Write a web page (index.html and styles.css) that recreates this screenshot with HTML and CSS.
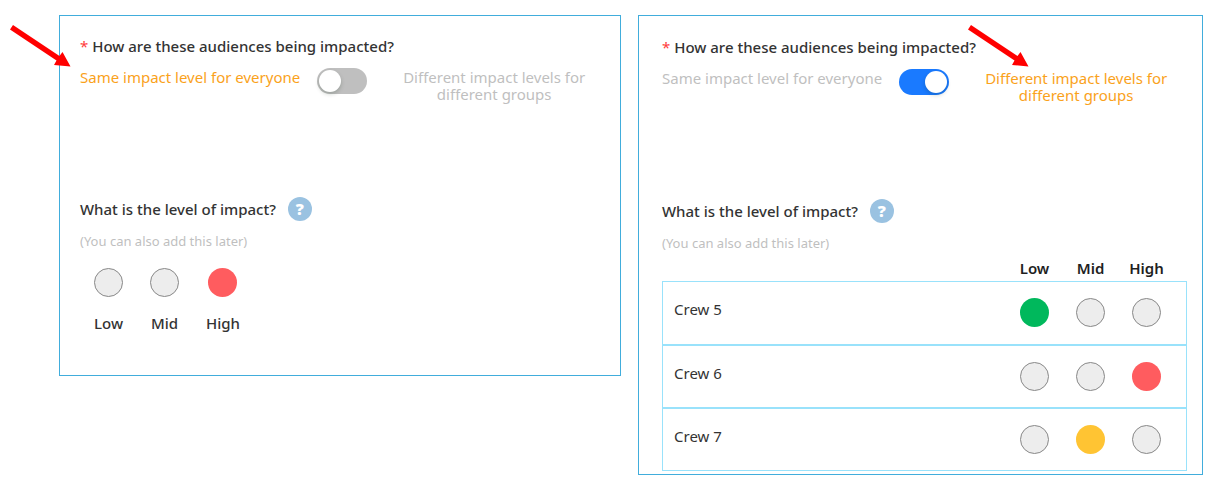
FILE: index.html
```html
<!DOCTYPE html>
<html lang="en">
<head>
<meta charset="utf-8">
<meta name="viewport" content="width=device-width, initial-scale=1">
<title>Audience impact</title>
<link rel="stylesheet" href="styles.css">
</head>
<body>
<main class="board">
  <section class="panel panel-same">
    <h2 class="question"><span class="required">*</span> How are these audiences being impacted?</h2>
    <div class="mode">
      <label class="mode-label active" for="mode-a">Same impact level for everyone</label>
      <input class="switch" type="checkbox" role="switch" id="mode-a">
      <label class="mode-label mode-different" for="mode-a">Different impact levels for different groups</label>
    </div>
    <div class="level-head">
      <h2 class="question">What is the level of impact?</h2>
      <button class="help" type="button" aria-label="Help">?</button>
    </div>
    <p class="hint">(You can also add this later)</p>
    <div class="levels">
      <label class="level"><input class="dot" type="radio" name="everyone">Low</label>
      <label class="level"><input class="dot" type="radio" name="everyone">Mid</label>
      <label class="level"><input class="dot high" type="radio" name="everyone" checked>High</label>
    </div>
    <svg class="arrow" width="62" height="44" viewBox="0 0 62 44" aria-hidden="true"><path d="M3 0 49.500 31 52.500 27 60.500 41.500 44 40 46.500 35.500 0 4.500Z"/></svg>
  </section>

  <section class="panel panel-groups">
    <h2 class="question"><span class="required">*</span> How are these audiences being impacted?</h2>
    <div class="mode">
      <label class="mode-label" for="mode-b">Same impact level for everyone</label>
      <input class="switch" type="checkbox" role="switch" id="mode-b" checked>
      <label class="mode-label mode-different active" for="mode-b">Different impact levels for different groups</label>
    </div>
    <div class="level-head">
      <h2 class="question">What is the level of impact?</h2>
      <button class="help" type="button" aria-label="Help">?</button>
    </div>
    <p class="hint">(You can also add this later)</p>
    <table class="groups">
      <thead>
        <tr><td></td><th class="choice" scope="col">Low</th><th class="choice" scope="col">Mid</th><th class="choice" scope="col">High</th></tr>
      </thead>
      <tbody>
        <tr>
          <th class="crew" scope="row">Crew 5</th>
          <td class="choice"><input class="dot low" type="radio" name="crew5" aria-label="Low" checked></td>
          <td class="choice"><input class="dot mid" type="radio" name="crew5" aria-label="Mid"></td>
          <td class="choice"><input class="dot high" type="radio" name="crew5" aria-label="High"></td>
        </tr>
        <tr>
          <th class="crew" scope="row">Crew 6</th>
          <td class="choice"><input class="dot low" type="radio" name="crew6" aria-label="Low"></td>
          <td class="choice"><input class="dot mid" type="radio" name="crew6" aria-label="Mid"></td>
          <td class="choice"><input class="dot high" type="radio" name="crew6" aria-label="High" checked></td>
        </tr>
        <tr>
          <th class="crew" scope="row">Crew 7</th>
          <td class="choice"><input class="dot low" type="radio" name="crew7" aria-label="Low"></td>
          <td class="choice"><input class="dot mid" type="radio" name="crew7" aria-label="Mid" checked></td>
          <td class="choice"><input class="dot high" type="radio" name="crew7" aria-label="High"></td>
        </tr>
      </tbody>
    </table>
    <svg class="arrow" width="62" height="44" viewBox="0 0 62 44" aria-hidden="true"><path d="M3 0 49.500 31 52.500 27 60.500 41.500 44 40 46.500 35.500 0 4.500Z"/></svg>
  </section>
</main>
</body>
</html>
```
FILE: styles.css
```css
* {
  box-sizing: border-box;
}

body {
  margin: 0;
  background: #fff;
  color: #333;
  font: 15px/20px "Noto Sans", "Open Sans", sans-serif;
}

.board {
  display: grid;
  grid-template-columns: 562fr 565fr;
  gap: 17px;
  align-items: start;
  padding: 15px 7px 8px 59px;
}

.panel {
  position: relative;
  border: 1px solid #41addc;
  padding: 20px 15px 42px 20px;
}

.panel-groups {
  padding: 21px 15px 3px 23px;
}

.question {
  margin: 0;
  font-size: 15px;
  font-weight: 500;
  line-height: 20px;
}

.required {
  color: #ff3b3b;
  font-weight: 400;
}

.mode {
  display: flex;
  align-items: flex-start;
  gap: 17px;
  margin-top: 12px;
}

.mode-label {
  padding-top: 1px;
  color: #bfbfbf;
  line-height: 17px;
}

.mode-label.active {
  color: #faa21b;
}

.mode-different {
  width: 220px;
  text-align: center;
}

.switch {
  appearance: none;
  flex: none;
  display: flex;
  width: 50px;
  height: 26px;
  margin: 0;
  padding: 2px;
  border-radius: 13px;
  background: #bfbfbf;
}

.switch::before {
  content: "";
  width: 22px;
  height: 22px;
  border-radius: 50%;
  background: #fff;
  box-shadow: 0 2px 4px rgba(0, 35, 11, 0.2);
}

.switch:checked {
  justify-content: flex-end;
  background: #1a7aff;
}

.level-head {
  display: flex;
  align-items: center;
  gap: 12px;
  margin-top: 94px;
}

.panel-groups .level-head {
  margin-top: 95px;
}

.help {
  width: 24px;
  height: 24px;
  padding: 0;
  border: 0;
  border-radius: 50%;
  background: #9ac2e1;
  color: #fff;
  font: 800 16px/24px "Open Sans", sans-serif;
}

.hint {
  margin: 10px 0 0;
  color: #bfbfbf;
  font-size: 13px;
  line-height: 20px;
}

.levels {
  display: flex;
  gap: 27px;
  margin: 17px 0 0 14px;
}

.level {
  display: grid;
  justify-items: center;
  gap: 16px;
  font-weight: 500;
}

.dot {
  appearance: none;
  display: block;
  width: 29px;
  height: 29px;
  margin: 0 auto;
  border: 1px solid #888;
  border-radius: 50%;
  background: #ededed;
}

.dot:checked {
  border: 0;
}

.low:checked {
  background: #00b85c;
}

.mid:checked {
  background: #ffc433;
}

.high:checked {
  background: #ff5c5f;
}

.groups {
  width: 100%;
  margin-top: 5px;
  border-collapse: collapse;
}

.groups td,
.groups th {
  padding: 0;
}

.groups thead th {
  padding-bottom: 3px;
  color: #1f1f1f;
  font-weight: 600;
}

.groups tbody tr {
  height: 63px;
  border: 2px solid #99e2fb;
  border-width: 2px 1px;
}

.groups tbody tr:first-child {
  border-top-width: 1px;
}

.groups tbody tr:last-child {
  border-bottom-width: 1px;
}

.groups .crew {
  padding: 17px 11px;
  font-weight: 400;
  text-align: left;
  vertical-align: top;
}

.choice {
  width: 56px;
  text-align: center;
}

.choice:last-child {
  width: 68px;
  padding-right: 12px;
}

.arrow {
  position: absolute;
  top: 9px;
  left: -50px;
  fill: #f00;
}

.panel-groups .arrow {
  left: 329px;
}
```
